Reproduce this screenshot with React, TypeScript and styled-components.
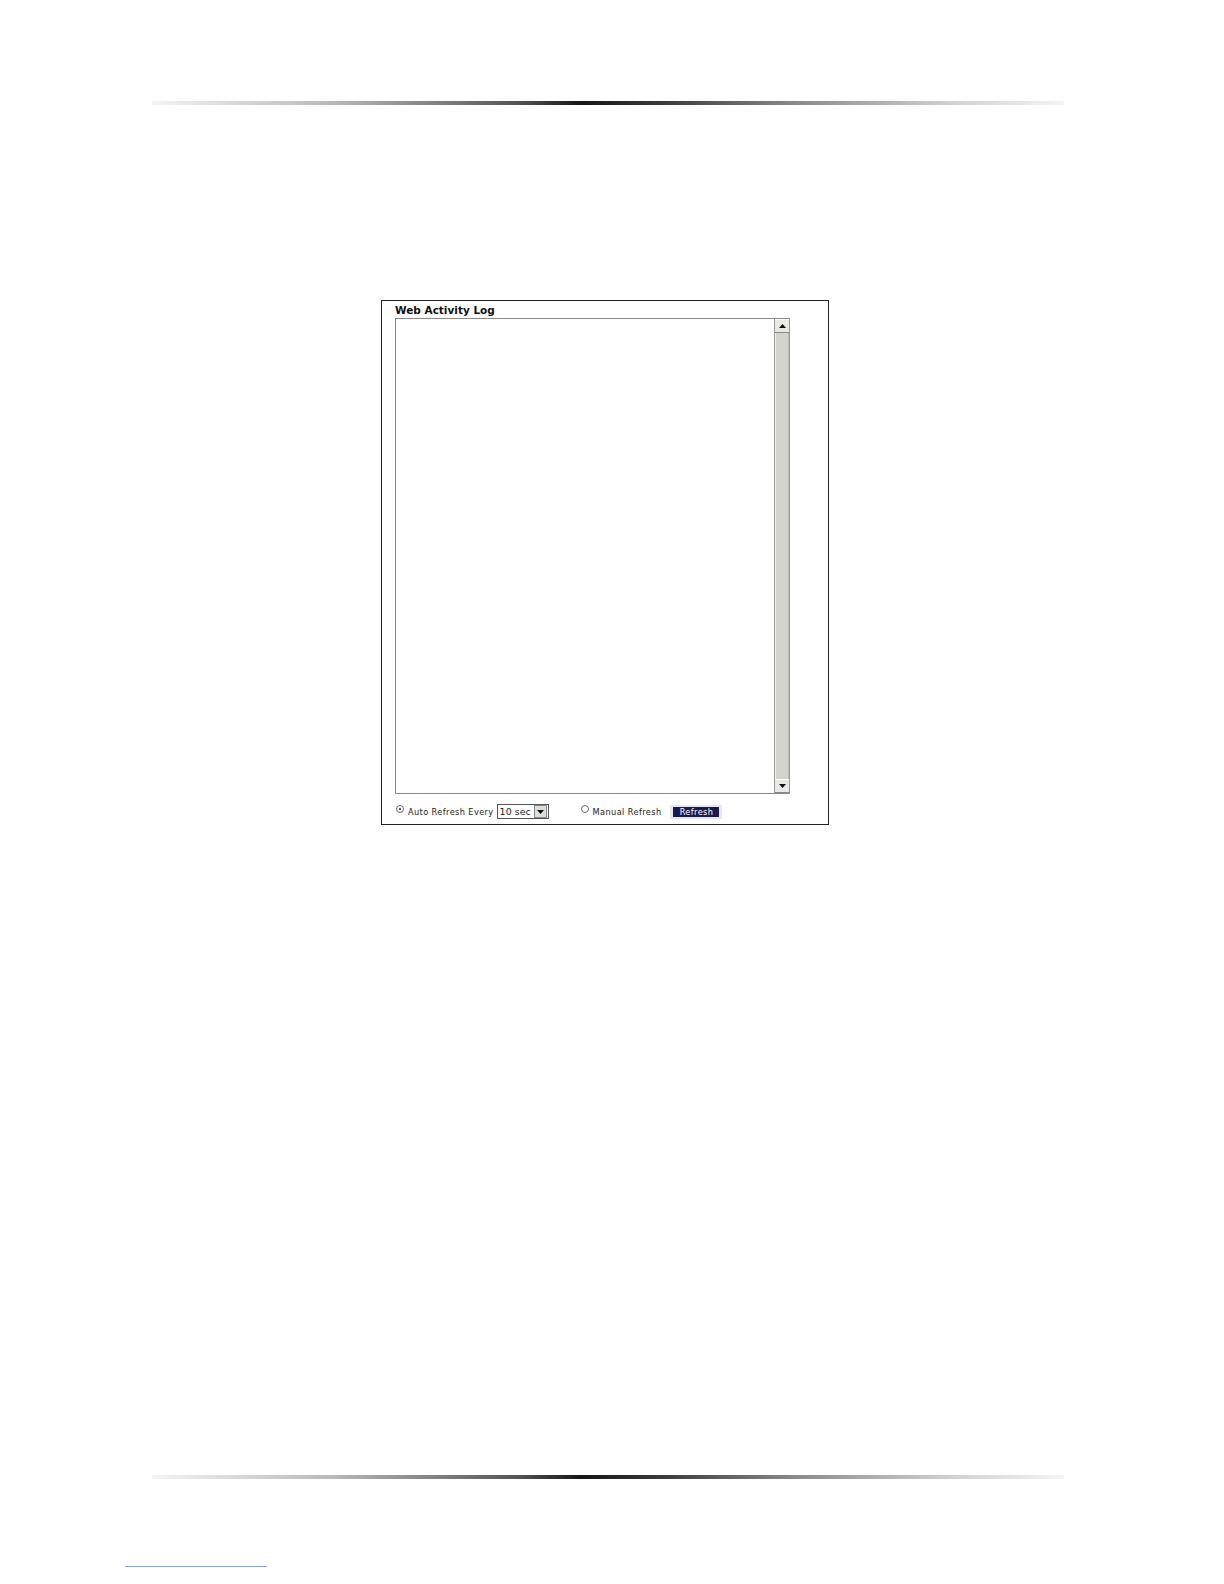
import React from "react";
import styled, { createGlobalStyle } from "styled-components";

const Global = createGlobalStyle`
  html, body { margin: 0; padding: 0; background: #fff; overflow: hidden; }
  body { font-family: "DejaVu Sans", "Liberation Sans", sans-serif; }
`;

const Page = styled.div`
  width: 1224px;
  height: 1584px;
  display: flex;
  flex-direction: column;
  align-items: flex-start;
  position: relative;
  overflow: hidden;
`;

const Rule = styled.div<{ $top: number }>`
  margin-top: ${(p) => p.$top}px;
  margin-left: 152px;
  width: 912px;
  height: 4px;
  flex-shrink: 0;
  background: linear-gradient(
    to right,
    #f4f4f4 0%,
    #b8b8b8 20%,
    #555 40%,
    #161616 47%,
    #3a3a3a 56%,
    #888 70%,
    #d2d2d2 88%,
    #f4f4f4 100%
  );
`;

const Panel = styled.div`
  margin-top: 195px;
  margin-left: 381px;
  width: 446px;
  height: 523px;
  flex-shrink: 0;
  border: 1px solid #222;
  display: flex;
  flex-direction: column;
`;

const Title = styled.div`
  margin: 3px 0 0 13px;
  font-family: "DejaVu Sans", sans-serif;
  font-weight: bold;
  font-size: 10.5px;
  line-height: 13px;
  color: #111;
`;

const LogBox = styled.div`
  margin: 1px 0 0 13px;
  width: 394px;
  height: 474px;
  border: 1px solid #8a8a8a;
  border-right: none;
  display: flex;
  justify-content: flex-end;
  background: #fff;
`;

const ScrollBar = styled.div`
  width: 14px;
  display: flex;
  flex-direction: column;
  background: #d6d6d2;
  border-left: 1px solid #9a9a9a;
  border-right: 1px solid #9a9a9a;
`;

const Arrow = styled.div`
  height: 12px;
  background: #e8e8e4;
  border-top: 1px solid #fff;
  border-bottom: 1px solid #888;
  display: flex;
  align-items: center;
  justify-content: center;
`;

const Track = styled.div`
  flex: 1;
  background: #d4d4cf;
  border-left: 1px solid #f0f0f0;
  border-right: 1px solid #b8b8b4;
`;

const Controls = styled.div`
  display: flex;
  align-items: center;
  margin: 10px 0 0 14px;
  font-family: "DejaVu Sans", sans-serif;
  font-size: 8.2px;
  color: #222;
`;

const Radio = styled.span`
  display: inline-block;
  flex-shrink: 0;
  width: 6px;
  height: 6px;
  border-radius: 50%;
  border: 1px solid #666;
  position: relative;
  margin-top: -5px;
  margin-right: 4px;
`;

const Dot = styled.span`
  position: absolute;
  left: 2px;
  top: 2px;
  width: 2px;
  height: 2px;
  border-radius: 50%;
  background: #222;
`;

const Label = styled.span<{ $gap: number }>`
  margin-right: ${(p) => p.$gap}px;
  white-space: nowrap;
  letter-spacing: 0.4px;
`;

const Select = styled.div`
  display: flex;
  align-items: center;
  flex-shrink: 0;
  height: 15px;
  width: 52px;
  border: 1px solid #555;
  box-sizing: border-box;
  margin-right: 32px;
  font-size: 9.5px;
  white-space: nowrap;
  justify-content: space-between;
  padding-left: 2px;
`;

const SelBtn = styled.span`
  width: 11px;
  height: 11px;
  background: #ddd;
  border: 1px solid #888;
  margin-right: 1px;
  display: flex;
  align-items: center;
  justify-content: center;
`;

const BtnWrap = styled.div`
  background: #e6e6f4;
  padding: 2px 3px;
`;

const Button = styled.div`
  background: #1a1a50;
  color: #fff;
  font-size: 8.2px;
  width: 46px;
  height: 10px;
  line-height: 10px;
  text-align: center;
  letter-spacing: 0.4px;
  white-space: nowrap;
`;

const Link = styled.div`
  position: absolute;
  left: 125px;
  top: 1566px;
  width: 142px;
  height: 1px;
  background: #8ea0e8;
`;

const Tri = ({ up }: { up: boolean }) => (
  <svg width="7" height="4" viewBox="0 0 7 4">
    <polygon points={up ? "3.5,0 7,4 0,4" : "0,0 7,0 3.5,4"} fill="#111" />
  </svg>
);

export default function App() {
  return (
    <Page>
      <Global />
      <Rule $top={101} />
      <Panel>
        <Title>Web Activity Log</Title>
        <LogBox>
          <ScrollBar>
            <Arrow>
              <Tri up />
            </Arrow>
            <Track />
            <Arrow>
              <Tri up={false} />
            </Arrow>
          </ScrollBar>
        </LogBox>
        <Controls>
          <Radio>
            <Dot />
          </Radio>
          <Label $gap={3}>Auto Refresh Every</Label>
          <Select>
            10 sec
            <SelBtn>
              <Tri up={false} />
            </SelBtn>
          </Select>
          <Radio />
          <Label $gap={9}>Manual Refresh</Label>
          <BtnWrap>
            <Button>Refresh</Button>
          </BtnWrap>
        </Controls>
      </Panel>
      <Rule $top={650} />
      <Link />
    </Page>
  );
}
